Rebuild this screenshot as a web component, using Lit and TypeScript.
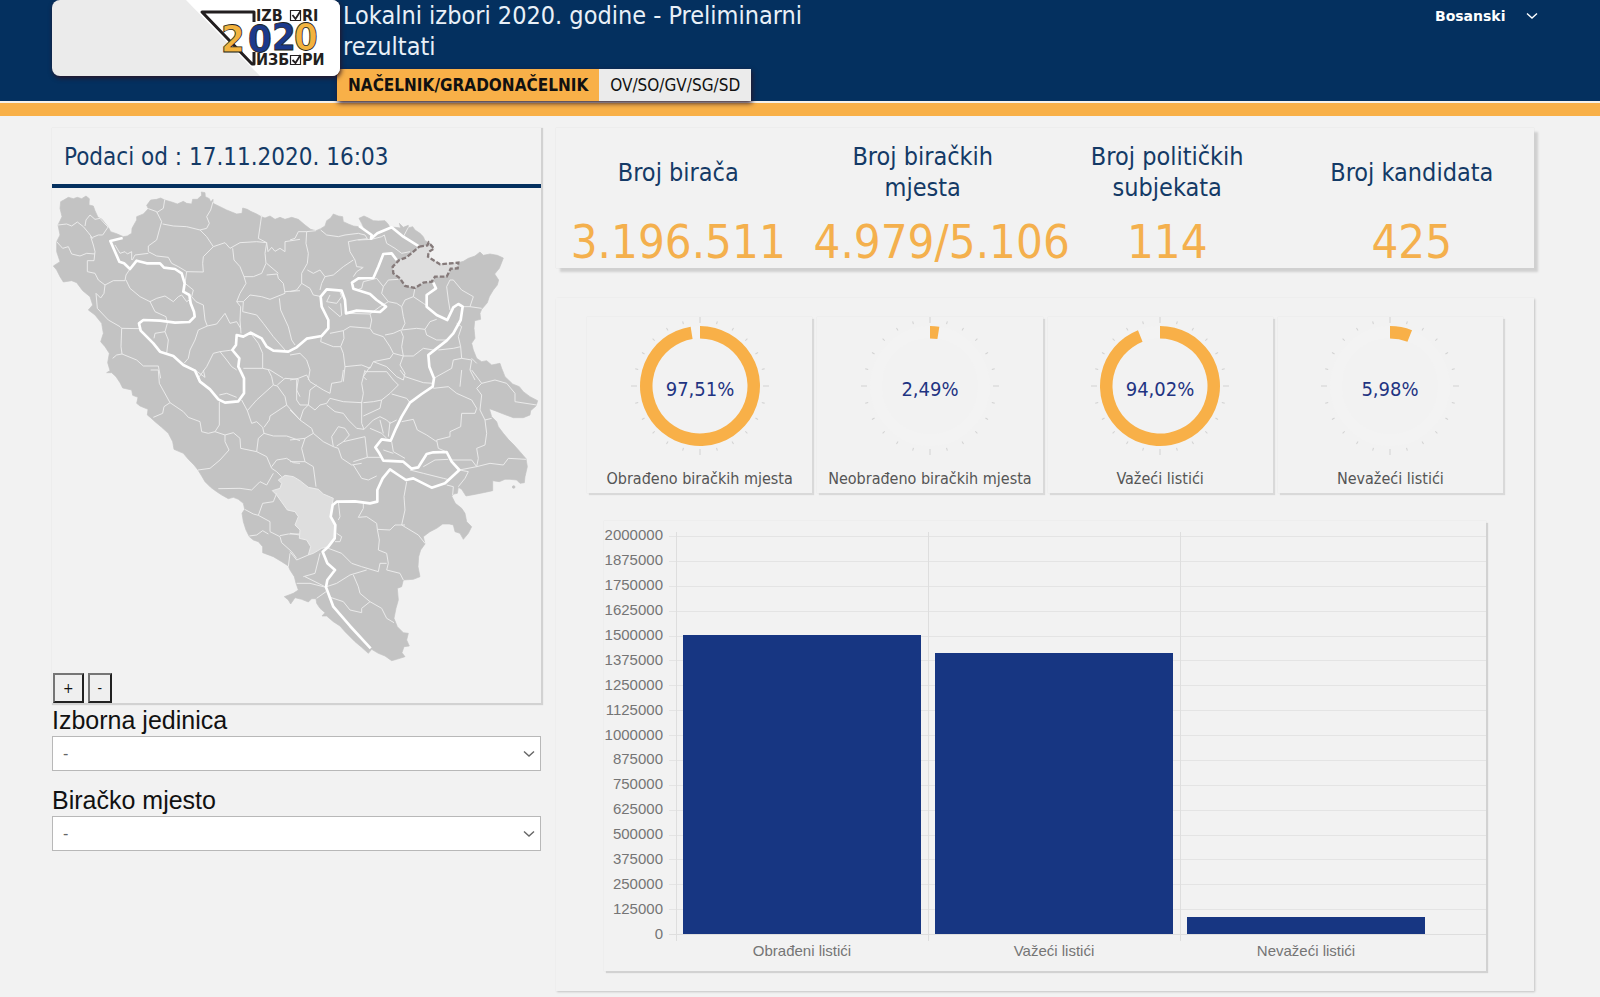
import { LitElement, html, svg, css } from "lit";
import { customElement, property } from "lit/decorators.js";

/* ---------- map geometry ---------- */

const COUNTRY =
  "62,245 75,238 85,232 100,236 112,232 125,236 138,228 148,236 147,255 160,258 165,272 174,292 186,298 205,322 212,335 232,342 250,350 262,348 275,340 276,325 290,300 290,290 310,282 325,266 320,256 332,240 350,238 362,234 374,240 395,246 412,252 430,244 440,250 455,252 458,238 472,238 485,226 484,216 495,218 496,230 508,236 512,246 519,238 519,250 540,260 560,270 575,276 590,282 606,280 608,264 622,268 632,274 650,282 664,290 675,294 690,288 705,298 720,292 735,298 755,292 775,298 795,315 812,328 828,332 842,326 855,318 860,302 872,294 880,282 895,288 908,290 910,305 925,312 940,318 955,320 972,325 965,310 957,295 972,288 985,294 1000,302 1015,303 1035,302 1044,312 1050,322 1065,322 1082,324 1078,310 1090,322 1105,316 1104,324 1118,320 1125,330 1140,340 1150,350 1155,362 1168,368 1178,376 1182,386 1170,392 1166,396 1164,410 1185,425 1200,433 1230,432 1255,428 1270,424 1285,415 1305,408 1320,396 1330,406 1350,402 1372,406 1390,414 1386,425 1378,445 1364,462 1376,480 1372,495 1360,510 1348,530 1342,548 1325,568 1320,580 1322,598 1304,602 1302,625 1305,655 1295,670 1300,690 1310,715 1325,725 1340,722 1355,735 1380,730 1385,745 1388,752 1395,770 1418,792 1438,800 1450,815 1470,830 1493,842 1488,858 1472,872 1470,885 1450,893 1420,893 1390,882 1365,872 1348,866 1355,890 1370,905 1375,920 1390,940 1405,958 1422,975 1440,995 1458,1016 1462,1040 1455,1070 1453,1088 1440,1090 1430,1080 1410,1078 1395,1078 1378,1085 1358,1082 1358,1112 1330,1118 1300,1124 1278,1128 1265,1108 1255,1102 1252,1120 1242,1122 1235,1128 1246,1150 1265,1165 1275,1180 1280,1205 1295,1220 1285,1240 1270,1258 1260,1240 1245,1235 1240,1215 1228,1212 1208,1212 1190,1225 1170,1235 1150,1250 1155,1272 1142,1290 1136,1310 1134,1340 1140,1370 1120,1378 1090,1380 1085,1400 1072,1405 1075,1440 1068,1465 1062,1495 1072,1520 1090,1538 1105,1540 1100,1560 1108,1578 1092,1580 1086,1598 1095,1610 1070,1618 1055,1622 1035,1608 1015,1600 995,1588 985,1600 965,1582 945,1565 930,1550 915,1535 900,1518 880,1505 860,1488 846,1488 855,1478 840,1465 830,1450 828,1436 815,1436 805,1446 785,1438 765,1433 752,1452 745,1440 733,1430 760,1420 775,1410 768,1390 763,1370 750,1350 745,1338 725,1325 700,1310 668,1298 668,1280 655,1265 640,1260 628,1250 618,1230 610,1205 606,1180 614,1168 610,1150 595,1138 580,1132 565,1136 545,1125 530,1115 512,1102 495,1085 485,1068 474,1050 462,1035 445,1018 430,1000 402,988 398,965 385,940 365,922 345,905 332,893 322,885 324,868 300,858 290,850 294,832 278,826 275,810 248,804 240,788 228,770 215,758 200,758 210,752 203,728 208,700 195,680 182,665 190,640 185,610 165,585 145,570 158,555 150,530 128,512 110,488 95,482 70,486 60,470 50,450 40,438 60,425 50,395 50,365 60,345 54,315 66,290 60,265";

const MOSTAR =
  "715,1080 735,1066 760,1070 780,1082 805,1102 835,1108 850,1122 880,1135 875,1160 872,1190 884,1215 884,1255 865,1280 845,1285 820,1300 805,1305 812,1280 800,1260 778,1255 780,1230 765,1215 775,1190 765,1175 742,1170 710,1125 697,1112 720,1105 725,1090";

const BRCKO =
  "1138,380 1162,376 1166,368 1182,386 1166,396 1164,410 1200,433 1255,428 1253,445 1232,446 1220,470 1185,470 1175,485 1150,488 1125,504 1095,498 1080,475 1060,460 1058,440 1078,420 1100,412";

const ENTITY_LINES = [
  "248,354 211,363 225,395 238,425 252,430 270,447 290,422 320,430 360,430 372,443 405,447 425,460 434,490 430,515 448,525 452,550 462,575 464,590 448,606 405,608 360,602 310,600 297,610 302,632 320,650 340,670 360,695 400,708 430,735 465,752 480,785 510,808 535,838 555,848 595,844 612,820 612,775 605,760 595,740 598,715 577,690 588,675 590,645 610,650 632,638 665,655 680,680 700,692 745,695 770,682 800,656 845,648 865,625 865,600 845,560 842,530 860,508 905,512 915,540 918,580 950,572 1020,576 1038,560 1010,540 990,522 940,506 936,488 955,475 1000,474 1015,440 1030,402 1055,400 1070,420",
  "957,318 995,345 993,356 1012,340 1055,322 1090,350 1138,380",
  "1180,488 1188,505 1160,525 1160,560 1190,585 1222,600 1240,562 1255,552 1268,560 1262,600 1240,640 1220,662 1190,685 1165,705 1168,740 1182,775 1178,800 1145,822 1110,848 1085,890 1068,925 1052,962 1025,958 1006,982 1018,1000 1030,1022 1090,1025 1115,1046 1135,1042 1160,1002 1180,997 1220,996 1235,1025 1258,1050 1215,1090 1175,1103 1120,1075 1098,1080 1075,1065 1050,1048 1028,1075 1012,1110 1012,1145 990,1150 945,1144 890,1145 878,1155 872,1190 886,1215 884,1255 865,1280 848,1295 862,1330 885,1350 862,1380 858,1402 880,1460 930,1518 992,1585",
];

/* municipal borders, one list per map sheet */
const SHEETS: { x: number; y: number; lines: string[] }[] = [
  {
    x: 0,
    y: 0,
    lines: [
      "54,315 80,312 95,318 112,306 130,320 145,338 158,355 152,350 160,375 165,395",
      "135,318 138,300 150,285 165,298 180,295 195,312 205,322",
      "158,352 175,345 188,345 205,320",
      "50,365 68,385 85,380 95,402 120,408 140,400 165,402",
      "165,395 162,422 142,422 142,455 165,460 175,480 195,495 192,520 182,534 168,520 172,565 205,600 240,620 245,625 243,680 246,702 230,705 218,715",
      "195,495 220,482 255,482 258,465 270,447",
      "258,480 270,505 300,530 330,545 350,535 375,528 400,545 415,530 425,525 440,545 448,540",
      "330,545 345,575 378,590 382,610 375,635 345,640 342,655",
      "245,625 298,626",
      "375,635 385,660 380,700",
      "246,702 290,720 310,738 355,738 362,775",
      "325,266 350,275 365,305 358,330 350,360 325,378 325,395 350,408 385,412 395,430 415,440 440,455 490,456 488,430 490,410 520,380 500,350 480,330 440,320 400,318 368,312",
      "225,375 240,400 255,395 262,402 275,395 275,420",
      "277,420 285,405 325,400",
      "374,240 370,265 350,278",
      "519,245 512,270 500,290 508,310 500,325 480,330",
      "520,380 555,368 570,385 600,368 650,365 680,368 675,400 678,430 665,460 640,470 612,470 600,440 582,420 578,385",
      "665,285 660,320 655,355 680,368 684,395 695,382 705,394 720,385 735,395 735,365 780,358",
      "612,470 618,490 600,520 590,545 602,560 600,600 603,640",
      "440,455 435,490 460,510 455,530 468,545 490,555 495,600 502,618 530,612 555,580 570,610 590,605 602,625",
      "502,618 475,630 465,660 450,690 445,715 432,730",
      "590,545 610,545 630,525 665,530 690,538 735,520 730,490 715,475 712,462 680,465",
      "735,515 780,512",
      "610,545 608,575 650,585 670,610 700,650 735,690",
      "718,535 722,570 745,620 755,660 765,675",
      "474,775 500,740 520,700 540,695 577,690",
      "632,640 655,670 668,700 668,745 610,745",
      "668,745 690,750 730,775",
      "680,430 715,460",
      "540,695 560,720 575,740 590,750",
    ],
  },
  {
    x: 750,
    y: 0,
    lines: [
      "0,360 15,355 25,335 50,335 78,332",
      "50,335 48,370 55,400 52,430 35,460 35,490 20,510 0,515",
      "92,330 110,345 145,350 165,345 205,340 225,345 232,356 200,360 175,365",
      "175,365 180,395 195,420 200,440 218,442",
      "190,420 160,440 130,465 105,470 90,450 70,460 52,450",
      "205,360 245,358 275,350 283,345 290,370 315,385 335,400 360,395",
      "105,470 95,490 90,510",
      "35,490 60,505 70,525 95,530",
      "220,442 200,455 190,470",
      "340,350 355,322",
      "280,500 275,520 295,545 320,550 335,560 345,540 370,530 375,504",
      "280,500 295,480 325,478",
      "220,485 215,505 200,510",
      "220,485 260,475 280,500",
      "120,525 110,545 140,550 155,530 150,515",
      "115,560 150,590 155,585 152,550",
      "168,580 240,582 245,600 240,625 180,620 160,632 120,640",
      "240,625 250,640 280,650 300,680 310,700 340,708 335,680 340,650 332,630 310,640 285,645",
      "335,560 340,590 345,610 335,630 380,625 405,628 420,605 440,598",
      "295,545 270,560 240,582",
      "370,530 400,550 412,558",
      "340,708 370,708 400,685 430,690",
      "310,700 300,715 250,725 240,745 215,735 165,740 160,700 152,680 162,655 160,632",
      "95,648 92,665 130,680 152,680",
      "165,740 160,785",
      "240,740 220,770 230,780",
      "250,725 290,740 320,770 340,780",
      "340,708 330,735 345,760 340,780",
      "405,628 410,645 440,660 470,660",
      "480,480 470,500 475,540 480,570",
      "480,480 490,480 515,510 550,530 540,560 575,565",
      "518,560 540,560",
      "500,610 515,620 505,650 512,680 490,685 445,690",
      "512,680 515,715 545,720 540,750 555,780",
      "515,715 490,720 485,745 440,770 432,775",
      "545,715 560,730",
      "0,705 30,700 50,720 60,750 55,780",
    ],
  },
  {
    x: 0,
    y: 750,
    lines: [
      "332,0 355,0 358,40 390,98 430,125 445,142 480,155 485,185 505,190 525,185 538,165 538,95",
      "390,98 372,110 368,130 340,142",
      "538,75 560,70 590,82",
      "525,185 555,195 555,215 567,240 540,270 510,295 474,300",
      "555,195 580,188 600,205 602,235 650,245 655,205 672,190 668,172 650,155 635,160 622,122 605,90",
      "622,122 650,90 700,45 695,20 685,0",
      "672,172 688,150 690,138 740,105 735,80 712,48 700,45",
      "712,45 735,25 775,28 770,60 780,80",
      "740,105 780,150",
      "672,190 700,198 740,198 780,212",
      "650,245 680,260 695,295 710,305 725,320",
      "695,290 710,270 740,265 760,278 780,280",
      "535,356 600,355 635,360 660,335 680,345 700,310",
      "614,418 640,432 655,436 690,455 690,485 720,500 725,518 755,545 770,565",
      "655,436 668,400 700,395 710,370",
      "628,498 650,495 668,482 685,492",
      "720,497 745,492 780,492",
      "750,550 745,590",
      "465,0 495,22 490,0",
    ],
  },
  {
    x: 750,
    y: 750,
    lines: [
      "0,30 25,25 50,15 60,35 100,60 120,70 125,40 155,35 160,0",
      "20,30 20,90 30,105 55,105 60,60 80,45",
      "55,105 75,120 90,105 110,100 120,85",
      "120,85 160,95 215,98 220,70 215,40 225,0",
      "215,95 215,160 222,178 200,175 175,150 160,130 135,125 110,105",
      "30,150 40,120 55,105",
      "0,120 30,150 65,175 70,190 45,205 0,210",
      "70,190 100,215 130,230 145,235 155,265 185,285 215,280",
      "130,230 125,200 145,170 165,175 178,195 160,215 140,228",
      "160,215 225,200 232,262 190,275",
      "45,205 35,235 45,275 0,275",
      "45,275 70,290 78,350",
      "232,262 270,262",
      "190,285 215,325 235,330 260,318",
      "225,5 290,5 310,30 325,45 300,70 275,90 270,115 220,138",
      "220,98 250,95 275,90",
      "222,178 250,150 270,140 290,150 300,160 320,150",
      "240,175 275,190 290,205",
      "270,150 280,190",
      "300,155 295,200",
      "305,215 310,245 345,265",
      "280,240 310,250",
      "305,72 350,85 360,98",
      "330,0 345,20 400,38 430,40",
      "430,55 475,50 500,70 545,90 560,115 555,130 515,130",
      "335,155 370,148 382,180 410,195 440,215",
      "515,130 512,170 480,185 480,200 440,210 445,235 470,246",
      "545,0 575,40 560,55 575,75 570,120 585,150 605,145",
      "575,40 615,30 650,40 675,70 675,95 740,105",
      "515,0 510,50",
      "585,150 590,190 585,225 560,235 565,265 560,290",
      "485,270 545,270 560,290 600,280 640,285 655,265 708,268",
      "508,300 560,290",
      "508,300 535,305 525,325 505,350",
      "400,290 435,270 475,268",
      "360,300 400,310 460,325 480,330",
      "470,345 490,350 488,375",
      "350,335 342,380 345,420 335,465 385,495 405,520",
      "345,465 315,465 300,480 262,478 260,460 230,440 205,442 220,415 220,400",
      "262,478 268,510 265,540 290,550 295,580 290,600 330,610 340,630",
      "115,535 155,550 185,580 215,590 265,605 270,580 290,580",
      "110,650 140,640 180,615 230,600",
      "190,615 205,650 210,670 240,695 215,715 215,728 180,720 160,695 115,680",
      "240,695 275,715 290,745 312,758",
      "145,395 150,440 145,450",
      "140,490 155,500 150,515 135,515",
      "40,620 75,610 90,550",
      "45,620 105,650",
      "20,640 60,640 108,652",
      "0,490 28,495",
      "0,545 20,570 55,555",
      "80,685 108,665",
    ],
  },
];

@customElement("election-map")
export class ElectionMap extends LitElement {
  static styles = css`
    :host {
      display: block;
    }
    .map {
      display: block;
      width: 100%;
      height: auto;
    }
    .land {
      fill: #c3c3c3;
      stroke: #c3c3c3;
      stroke-width: 2;
    }
    .area {
      fill: #dedede;
    }
    .border {
      fill: none;
      stroke: #ebebeb;
      stroke-width: 3;
      stroke-linejoin: round;
    }
    .entity {
      fill: none;
      stroke: #ffffff;
      stroke-width: 8;
      stroke-linejoin: round;
    }
    .district {
      fill: #dedede;
      stroke: #857a7a;
      stroke-width: 7;
      stroke-dasharray: 14 6;
    }
  `;

  render() {
    return html`
      <svg class="map" viewBox="36 204 1467 1456" role="img" aria-label="Bosna i Hercegovina">
        <polygon class="land" points=${COUNTRY}></polygon>
        <circle class="land" cx="1421" cy="1101" r="4"></circle>
        <polygon class="area" points=${MOSTAR}></polygon>
        ${SHEETS.map(
          (s) => svg`<g transform="translate(${s.x} ${s.y})">
            ${s.lines.map((l) => svg`<polyline class="border" points=${l}></polyline>`)}
          </g>`
        )}
        <polygon class="border" points=${MOSTAR}></polygon>
        ${ENTITY_LINES.map((l) => svg`<polyline class="entity" points=${l}></polyline>`)}
        <polygon class="district" points=${BRCKO}></polygon>
      </svg>
    `;
  }
}

@customElement("gauge-card")
export class GaugeCard extends LitElement {
  @property({ type: Number }) value = 0;
  @property() label = "";

  static styles = css`
    :host {
      display: flex;
      flex-direction: column;
      align-items: center;
      box-shadow: 2px 2px 1px #d9d9d9, 0 0 1px #dddddd;
      padding-bottom: 3px;
    }
    .dial {
      display: block;
      width: 140px;
      height: 140px;
    }
    .tick {
      stroke: #d2d2d2;
      stroke-width: 1;
    }
    .track {
      fill: none;
      stroke: #f3f3f3;
      stroke-width: 12;
    }
    .arc {
      fill: #f8b048;
    }
    .value {
      font: 20px "DejaVu Sans Condensed", "Noto Sans", sans-serif;
      fill: #1f3482;
      text-anchor: middle;
    }
    .label {
      margin-top: 11px;
      font: 16px/22px "DejaVu Sans Condensed", "Noto Sans", sans-serif;
      color: #555555;
      white-space: nowrap;
    }
  `;

  private arc(): string {
    const a = (this.value / 100) * Math.PI * 2;
    const large = this.value > 50 ? 1 : 0;
    const [s, c] = [Math.sin(a), -Math.cos(a)];
    return `M0 -60A60 60 0 ${large} 1 ${60 * s} ${60 * c}L${47.5 * s} ${47.5 * c}A47.5 47.5 0 ${large} 0 0 -47.5Z`;
  }

  render() {
    const ticks = Array.from({ length: 24 }, (_, i) => i);
    return html`
      <svg class="dial" viewBox="-70 -69 140 140" role="img" aria-label=${this.label}>
        ${ticks.map(
          (i) => svg`<line class="tick" y1=${i % 6 ? -67 : -69} y2=${i % 6 ? -64 : -63}
            transform="rotate(${i * 15})"></line>`
        )}
        <circle class="track" r="54"></circle>
        <path class="arc" d=${this.arc()}></path>
        <text class="value" y="10">${this.value.toFixed(2).replace(".", ",")}%</text>
      </svg>
      <div class="label">${this.label}</div>
    `;
  }
}

const CHART_MAX = 2000000;
const CHART_STEP = 125000;

@customElement("ballot-chart")
export class BallotChart extends LitElement {
  @property({ attribute: false }) items: { label: string; count: number }[] = [];

  static styles = css`
    :host {
      display: grid;
      grid-template-columns: 59px 1fr;
      column-gap: 6px;
      padding: 15px 0 8px;
      font: 15px/24px "Liberation Sans", Arial, sans-serif;
      color: #757575;
      box-shadow: 2px 2px 1px #d2d2d2, 0 0 1px #dddddd;
    }
    .scale {
      display: flex;
      flex-direction: column;
      justify-content: space-between;
      margin: -13px 0 -11px;
      text-align: right;
    }
    .plot {
      display: grid;
      height: 399px;
    }
    .plot > * {
      grid-area: 1 / 1;
    }
    .lines {
      display: flex;
      flex-direction: column;
      border-bottom: 1px solid #dedede;
    }
    .line {
      flex: 1;
      border-top: 1px solid #e4e4e4;
    }
    .bars,
    .names {
      display: grid;
      grid-template-columns: repeat(3, 1fr);
      padding: 0 54px 0 7px;
    }
    .slot {
      display: flex;
      align-items: flex-end;
      margin: -4px 0 -6px;
      padding: 4px 7px 7px 6px;
      border-left: 1px solid #dedede;
    }
    .bar {
      width: 100%;
      background: #173682;
    }
    .names {
      grid-column: 2;
      padding-top: 4px;
      text-align: center;
    }
  `;

  render() {
    const scale: number[] = [];
    for (let v = CHART_MAX; v >= 0; v -= CHART_STEP) scale.push(v);
    return html`
      <div class="scale">${scale.map((v) => html`<div>${v}</div>`)}</div>
      <div class="plot">
        <div class="lines">${scale.slice(1).map(() => html`<div class="line"></div>`)}</div>
        <div class="bars">
          ${this.items.map(
            (b) => html`<div class="slot">
              <div class="bar" style="height:${(b.count / CHART_MAX) * 100}%"></div>
            </div>`
          )}
        </div>
      </div>
      <div class="names">${this.items.map((b) => html`<div>${b.label}</div>`)}</div>
    `;
  }
}

const chevron = html`<svg class="chevron" viewBox="0 0 12 8" aria-hidden="true">
  <path d="M1 1.5l5 4.5 5-4.5"></path>
</svg>`;

@customElement("app-root")
export class AppRoot extends LitElement {
  static styles = css`
    :host {
      display: block;
      min-height: 100vh;
      background: #f2f2f2;
      font-family: "DejaVu Sans Condensed", "Noto Sans", sans-serif;
      color: #111111;
    }
    * {
      box-sizing: border-box;
    }
    .header {
      display: flex;
      align-items: flex-start;
      height: 101px;
      padding: 0 62px 0 52px;
      background: #04305f;
    }
    .stripe {
      height: 15px;
      border-top: 2px solid #f5f1ea;
      background: #f8b048;
    }
    .logo {
      position: relative;
      z-index: 1;
      display: block;
      flex: none;
      width: 288px;
      height: 76px;
      border-radius: 8px;
      overflow: hidden;
      background: #ebebeb;
      box-shadow: 1px 2px 5px #2a1526;
    }
    .logo svg {
      display: block;
    }
    .word {
      font: bold 16px "DejaVu Sans Condensed", "Noto Sans", sans-serif;
      fill: #231f20;
    }
    .digit {
      font: bold 38px "DejaVu Sans Condensed", "Noto Sans", sans-serif;
      stroke: #231f20;
      stroke-width: 0.8;
    }
    .gold {
      fill: #f2b33f;
    }
    .blue {
      fill: #1b3a8c;
    }
    .ink {
      fill: none;
      stroke: #231f20;
    }
    .brand {
      display: flex;
      flex-direction: column;
      align-items: flex-start;
      width: 490px;
      height: 101px;
      margin-left: -3px;
    }
    .title {
      margin: 0;
      padding-left: 6px;
      font-size: 25px;
      line-height: 31px;
      font-weight: normal;
      color: #e9f0f8;
    }
    .tabs {
      display: flex;
      margin-top: auto;
      box-shadow: 1px 2px 5px #2a1526;
    }
    .tab {
      height: 32px;
      padding: 1px 11px 0;
      border: 0;
      font: 17px/31px "DejaVu Sans Condensed", "Noto Sans", sans-serif;
      color: #111111;
      background: #ebebeb;
      white-space: nowrap;
    }
    .tab.active {
      font-weight: bold;
      background: #f8b048;
    }
    .lang {
      display: grid;
      align-items: center;
      margin-left: auto;
      margin-top: 3px;
    }
    .lang > *,
    .pick > * {
      grid-area: 1 / 1;
    }
    .lang select {
      appearance: none;
      width: 103px;
      height: 26px;
      padding: 0;
      border: 0;
      background: none;
      font: bold 14px "DejaVu Sans", sans-serif;
      color: #ffffff;
    }
    .chevron {
      justify-self: end;
      width: 12px;
      height: 8px;
      fill: none;
      stroke: #666666;
      stroke-width: 1.4;
      pointer-events: none;
    }
    .lang .chevron {
      stroke: #ffffff;
    }
    .main {
      display: grid;
      grid-template-columns: 1fr 2fr;
      column-gap: 15px;
      align-items: start;
      padding: 12px 66px 4px 52px;
    }
    .mapcard {
      box-shadow: 1px 1px 1px 1px #d2d2d2;
    }
    .date {
      margin: 0;
      padding: 14px 12px 11px;
      border-bottom: 4px solid #04305f;
      font-size: 24px;
      line-height: 31px;
      font-weight: normal;
      color: #143a66;
    }
    .zoom {
      display: flex;
      gap: 4px;
      padding: 0 1px;
    }
    .zoom button {
      height: 30px;
      padding: 0 8px;
      border: 2px outset #767676;
      background: #efefef;
      font: 14px "DejaVu Sans Condensed", "Noto Sans", sans-serif;
      color: #111111;
    }
    .field {
      display: block;
      padding: 3px 0 1px;
      font: 25px/29px "Liberation Sans", Arial, sans-serif;
    }
    .pick {
      display: grid;
      align-items: center;
      margin-bottom: 12px;
    }
    .pick select {
      appearance: none;
      width: 100%;
      height: 35px;
      padding: 0 10px;
      border: 1px solid #b8b8b8;
      border-radius: 0;
      background: #ffffff;
      font: 16px "Liberation Sans", Arial, sans-serif;
      color: #666666;
    }
    .pick .chevron {
      margin-right: 6px;
    }
    .stats {
      display: grid;
      grid-template-columns: repeat(4, minmax(0, 1fr));
      height: 140px;
      padding-top: 13px;
      box-shadow: 4px 4px 2px #d0d0d0, 0 0 1px #d6d6d6;
      text-align: center;
    }
    .stat {
      display: flex;
      flex-direction: column;
      align-items: center;
      padding: 0 13px;
    }
    .name {
      display: flex;
      align-items: center;
      justify-content: center;
      width: 170px;
      height: 62px;
      font-size: 25px;
      line-height: 31px;
      color: #143a66;
    }
    .number {
      width: 100%;
      padding-top: 14px;
      font-size: 47px;
      line-height: 50px;
      color: #f4b04d;
      white-space: nowrap;
    }
    .results {
      margin-top: 30px;
      padding: 19px 31px 20px;
      box-shadow: 1px 1px 2px #c4c4c4;
    }
    .gauges {
      display: grid;
      grid-template-columns: repeat(4, 1fr);
      gap: 5px;
      margin-bottom: 28px;
    }
    .chart {
      margin: 0 17px;
    }
  `;

  private stats = [
    { name: "Broj birača", number: "3.196.511" },
    { name: "Broj biračkih mjesta", number: "4.979/5.106" },
    { name: "Broj političkih subjekata", number: "114" },
    { name: "Broj kandidata", number: "425" },
  ];

  private gauges = [
    { label: "Obrađeno biračkih mjesta", value: 97.51 },
    { label: "Neobrađeno biračkih mjesta", value: 2.49 },
    { label: "Važeći listići", value: 94.02 },
    { label: "Nevažeći listići", value: 5.98 },
  ];

  private ballots = [
    { label: "Obrađeni listići", count: 1503000 },
    { label: "Važeći listići", count: 1412000 },
    { label: "Nevažeći listići", count: 87000 },
  ];

  render() {
    return html`
      <header class="header">
        <a class="logo" href="#" aria-label="Izbori 2020">
          <svg width="288" height="76" viewBox="0 0 288 76">
            <path d="M134 0H288V76H208Z" fill="#ffffff"></path>
            <path class="ink" stroke-width="3" stroke-linejoin="round" d="M202 22V12H150L200 64H202V52"></path>
            <text class="word" x="204" y="21">IZB</text>
            <text class="word" x="250" y="21">RI</text>
            <text class="word" x="204" y="65">ИЗБ</text>
            <text class="word" x="250" y="65">РИ</text>
            <path class="ink" stroke-width="1.2" d="M238.500 10.500h10v10h-10zM238.500 55.500h10v9h-10z"></path>
            <path class="ink" stroke-width="1.8" d="M240.500 15l3 4 5-8M240.500 60l3 3 5-8"></path>
            <text class="digit gold" x="169" y="52">2</text>
            <text class="digit blue" x="196" y="52">0</text>
            <text class="digit blue" x="220" y="50">2</text>
            <text class="digit gold" x="242" y="50">0</text>
          </svg>
        </a>
        <div class="brand">
          <h1 class="title">Lokalni izbori 2020. godine - Preliminarni rezultati</h1>
          <nav class="tabs">
            <button class="tab active">NAČELNIK/GRADONAČELNIK</button>
            <button class="tab">OV/SO/GV/SG/SD</button>
          </nav>
        </div>
        <div class="lang">
          <select aria-label="Jezik">
            <option>Bosanski</option>
          </select>
          ${chevron}
        </div>
      </header>
      <div class="stripe"></div>
      <main class="main">
        <section>
          <div class="mapcard">
            <h2 class="date">Podaci od : 17.11.2020. 16:03</h2>
            <election-map></election-map>
            <div class="zoom">
              <button>+</button>
              <button>-</button>
            </div>
          </div>
          <label class="field" for="unit">Izborna jedinica</label>
          <div class="pick">
            <select id="unit"><option>-</option></select>
            ${chevron}
          </div>
          <label class="field" for="place">Biračko mjesto</label>
          <div class="pick">
            <select id="place"><option>-</option></select>
            ${chevron}
          </div>
        </section>
        <section>
          <div class="stats">
            ${this.stats.map(
              (s) => html`<div class="stat">
                <div class="name">${s.name}</div>
                <div class="number">${s.number}</div>
              </div>`
            )}
          </div>
          <div class="results">
            <div class="gauges">
              ${this.gauges.map(
                (g) => html`<gauge-card .value=${g.value} .label=${g.label}></gauge-card>`
              )}
            </div>
            <ballot-chart class="chart" .items=${this.ballots}></ballot-chart>
          </div>
        </section>
      </main>
    `;
  }
}
